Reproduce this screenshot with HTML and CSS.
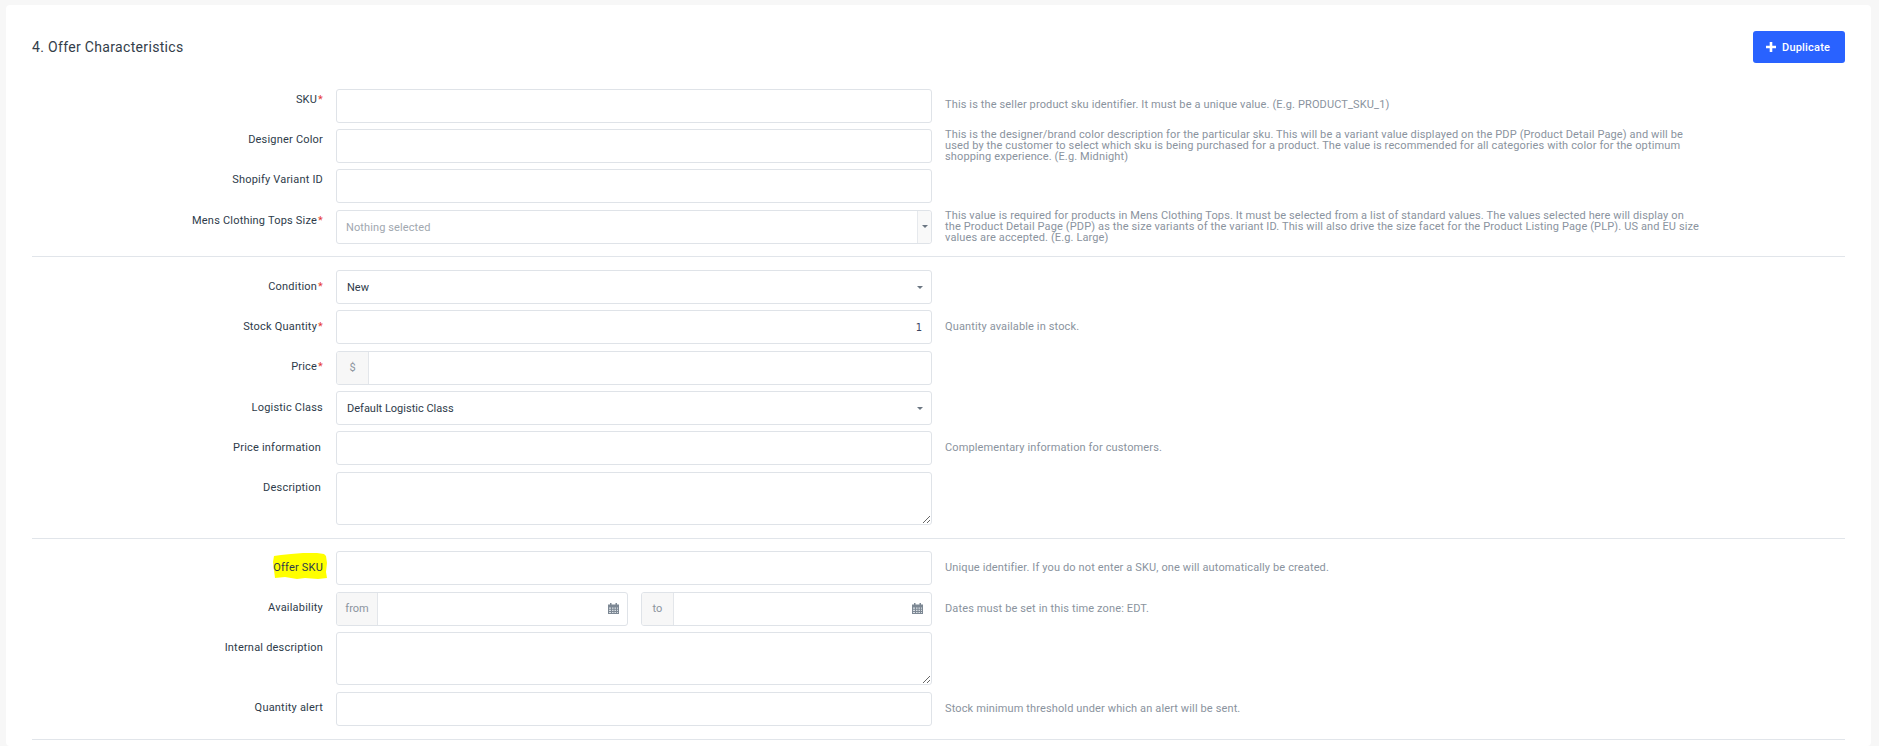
FILE: index.html
```html
<!DOCTYPE html>
<html lang="en">
<head>
<meta charset="utf-8">
<title>Offer Characteristics</title>
<link rel="stylesheet" href="styles.css">
</head>
<body>
<main class="card">
  <header class="head">
    <h2 class="title">4. Offer Characteristics</h2>
    <button class="btn" type="button">
      <svg class="btn-icon" viewBox="0 0 10 10" aria-hidden="true"><path d="M3.7 0h2.6v3.7H10v2.6H6.3V10H3.7V6.3H0V3.7h3.7z"/></svg>
      Duplicate
    </button>
  </header>

  <section class="group group-first">
    <div class="row row-top">
      <label class="label label-sku">SKU<span class="req">*</span></label>
      <input class="field" type="text">
      <p class="help help-raised">This is the seller product sku identifier. It must be a unique value. (E.g. PRODUCT_SKU_1)</p>
    </div>
    <div class="row row-top">
      <label class="label">Designer Color</label>
      <input class="field" type="text">
      <p class="help">This is the designer/brand color description for the particular sku. This will be a variant value displayed on the PDP (Product Detail Page) and will be<br>used by the customer to select which sku is being purchased for a product. The value is recommended for all categories with color for the optimum<br>shopping experience. (E.g. Midnight)</p>
    </div>
    <div class="row row-top">
      <label class="label">Shopify Variant ID</label>
      <input class="field" type="text">
    </div>
    <div class="row row-top row-short">
      <label class="label">Mens Clothing Tops Size<span class="req">*</span></label>
      <div class="field multi">
        <span class="placeholder">Nothing selected</span>
        <span class="multi-toggle"><i class="caret"></i></span>
      </div>
      <p class="help">This value is required for products in Mens Clothing Tops. It must be selected from a list of standard values. The values selected here will display on<br>the Product Detail Page (PDP) as the size variants of the variant ID. This will also drive the size facet for the Product Listing Page (PLP). US and EU size<br>values are accepted. (E.g. Large)</p>
    </div>
  </section>

  <section class="group">
    <div class="row">
      <label class="label">Condition<span class="req">*</span></label>
      <div class="field select"><span>New</span><i class="caret"></i></div>
    </div>
    <div class="row">
      <label class="label">Stock Quantity<span class="req">*</span></label>
      <div class="field number">1</div>
      <p class="help">Quantity available in stock.</p>
    </div>
    <div class="row">
      <label class="label">Price<span class="req">*</span></label>
      <div class="field input-group">
        <span class="addon addon-price">$</span>
        <input class="bare" type="text">
      </div>
    </div>
    <div class="row">
      <label class="label">Logistic Class</label>
      <div class="field select"><span>Default Logistic Class</span><i class="caret"></i></div>
    </div>
    <div class="row">
      <label class="label label-inset">Price information</label>
      <input class="field" type="text">
      <p class="help">Complementary information for customers.</p>
    </div>
    <div class="row">
      <label class="label label-inset">Description</label>
      <textarea class="field area"></textarea>
    </div>
  </section>

  <section class="group group-last">
    <div class="row">
      <label class="label"><svg class="marker" viewBox="0 0 54 26" aria-hidden="true"><path d="M1 3 8 2 18 1 30 0 44 0 51 1 53 3 54 10 53 19 54 25 45 26 32 25 24 26 12 24 2 25 1 17 0 9z"/></svg><span class="label-text">Offer SKU</span></label>
      <input class="field" type="text">
      <p class="help">Unique identifier. If you do not enter a SKU, one will automatically be created.</p>
    </div>
    <div class="row">
      <label class="label">Availability</label>
      <div class="dates">
        <div class="field input-group">
          <span class="addon addon-from">from</span>
          <input class="bare" type="text">
          <svg class="cal" viewBox="0 0 11 11" aria-hidden="true"><path class="cal-body" d="M0 1.5h2V0h1.5v1.5h4V0H9v1.5h2V11H0z"/><path class="cal-grid" d="M1 4.5h2v1.2H1zM4 4.5h1.5v1.2H4zM6.5 4.5H8v1.2H6.5zM9 4.5h1v1.2H9zM1 6.7h2v1.2H1zM4 6.7h1.5v1.2H4zM6.5 6.7H8v1.2H6.5zM9 6.7h1v1.2H9zM1 8.9h2v1.1H1zM4 8.9h1.5v1.1H4zM6.5 8.9H8v1.1H6.5zM9 8.9h1v1.1H9z"/></svg>
        </div>
        <div class="field input-group">
          <span class="addon addon-to">to</span>
          <input class="bare" type="text">
          <svg class="cal" viewBox="0 0 11 11" aria-hidden="true"><path class="cal-body" d="M0 1.5h2V0h1.5v1.5h4V0H9v1.5h2V11H0z"/><path class="cal-grid" d="M1 4.5h2v1.2H1zM4 4.5h1.5v1.2H4zM6.5 4.5H8v1.2H6.5zM9 4.5h1v1.2H9zM1 6.7h2v1.2H1zM4 6.7h1.5v1.2H4zM6.5 6.7H8v1.2H6.5zM9 6.7h1v1.2H9zM1 8.9h2v1.1H1zM4 8.9h1.5v1.1H4zM6.5 8.9H8v1.1H6.5zM9 8.9h1v1.1H9z"/></svg>
        </div>
      </div>
      <p class="help">Dates must be set in this time zone: EDT.</p>
    </div>
    <div class="row">
      <label class="label">Internal description</label>
      <textarea class="field area"></textarea>
    </div>
    <div class="row">
      <label class="label">Quantity alert</label>
      <input class="field" type="text">
      <p class="help">Stock minimum threshold under which an alert will be sent.</p>
    </div>
  </section>
</main>
</body>
</html>
```

FILE: styles.css
```css
* { box-sizing: border-box; }

html, body {
  height: 746px;
  margin: 0;
  overflow: hidden;
}

body {
  background: #f7f7f7;
  padding: 5px 8px 0 6px;
  font-family: Roboto, "Liberation Sans", sans-serif;
  font-size: 11px;
  color: #2e3b4a;
}

.card {
  height: 100%;
  padding: 26px 26px 0;
  border-radius: 4px;
  background: #fff;
}

.head {
  display: flex;
  justify-content: space-between;
  align-items: center;
  height: 32px;
  margin-bottom: 25.8px;
}

.title {
  margin: 0;
  font-size: 14px;
  font-weight: 400;
  letter-spacing: 0.33px;
  color: #333d49;
}

.btn {
  display: flex;
  align-items: center;
  gap: 6px;
  width: 92px;
  height: 32px;
  padding: 0 0 0 13px;
  border: 0;
  border-radius: 3px;
  background: #2962ff;
  color: #fff;
  font: 500 11px Roboto, "Liberation Sans", sans-serif;
  letter-spacing: 0.2px;
}

.btn-icon {
  width: 10px;
  height: 10px;
  fill: #fff;
}

.group {
  padding: 13px 0 13.3px;
  border-bottom: 1px solid #e1e5ea;
}

.group-first { padding: 0 0 14px; }

.group-last { padding-top: 12px; }

.row {
  display: grid;
  grid-template-columns: 304px 596px 1fr;
  height: 34px;
  margin-bottom: 6.33px;
}

.group .row:last-child { margin-bottom: 0; }

.row-short { height: 32.3px; }

.row:has(.area) { height: 53.3px; }

.label {
  position: relative;
  display: block;
  padding: 9.5px 13px 0 0;
  line-height: 13px;
  letter-spacing: 0.2px;
  text-align: right;
}

.row-top .label { padding-top: 4px; }

.label-inset { padding-right: 15px; }

.label-text { position: relative; }

.marker {
  position: absolute;
  top: 2px;
  right: 9px;
  width: 54px;
  height: 26px;
  fill: #ffff00;
}

.req {
  margin-left: 1px;
  color: #e53935;
}

.field {
  width: 596px;
  height: 100%;
  margin: 0;
  border: 1px solid #dfe3e8;
  border-radius: 3px;
  background: #fff;
  font: inherit;
  outline: 0;
}

.area {
  display: block;
  resize: vertical;
}

.select,
.multi,
.number {
  display: flex;
  align-items: center;
}

.select {
  justify-content: space-between;
  padding: 0 8px 0 10px;
}

.multi {
  justify-content: space-between;
  padding-left: 9px;
}

.placeholder {
  padding-top: 1px;
  letter-spacing: 0.1px;
  color: #a1a8b0;
}

.multi-toggle {
  display: flex;
  align-items: center;
  justify-content: center;
  align-self: stretch;
  width: 14px;
  border-left: 1px solid #e6e9ed;
  border-radius: 0 3px 3px 0;
  background: #f9f9f9;
}

.caret {
  width: 0;
  height: 0;
  border: 3px solid transparent;
  border-top: 3px solid #6b7682;
  border-bottom: 0;
}

.number {
  justify-content: flex-end;
  padding-right: 9px;
  font-family: "DejaVu Sans", sans-serif;
  font-size: 10px;
  color: #3a4560;
}

.input-group {
  display: flex;
  align-items: center;
  overflow: hidden;
}

.addon {
  display: flex;
  align-items: center;
  justify-content: center;
  flex: none;
  height: 100%;
  background: #f7f7f7;
  border-right: 1px solid #e3e6ea;
  color: #8b949e;
}

.addon-price { width: 32px; }
.addon-from { width: 41px; }
.addon-to { width: 32px; }

.bare {
  flex: 1;
  min-width: 0;
  height: 100%;
  border: 0;
  outline: 0;
  background: transparent;
}

.cal {
  flex: none;
  width: 11px;
  height: 11px;
  margin-right: 8px;
}

.cal-body { fill: #7d8894; }
.cal-grid { fill: #d9dee3; }

.dates {
  display: grid;
  grid-template-columns: 292px 291px;
  justify-content: space-between;
  width: 596px;
}

.dates .field { width: auto; }

.help {
  align-self: center;
  margin: 0;
  padding: 0 0 1px 13px;
  white-space: nowrap;
  font-size: 11px;
  line-height: 11px;
  letter-spacing: 0.13px;
  color: #8a939e;
}

.help-raised { margin-bottom: 2px; }
```
